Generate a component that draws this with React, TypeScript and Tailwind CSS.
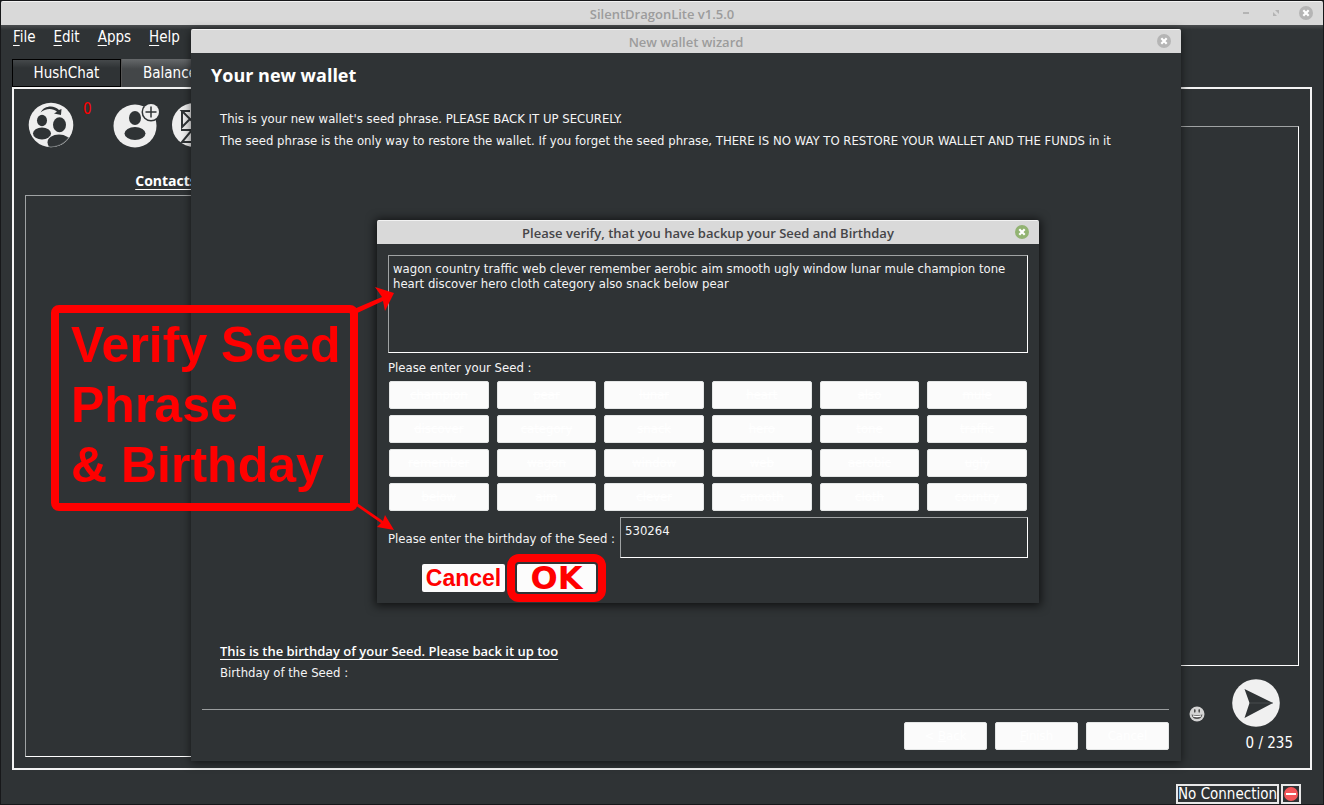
import React from "react";

const seedPhrase =
  "wagon country traffic web clever remember aerobic aim smooth ugly window lunar mule champion tone heart discover hero cloth category also snack below pear";

const words = [
  "champion", "pear", "lunar", "heart", "also", "mule",
  "discover", "category", "snack", "hero", "tone", "traffic",
  "remember", "wagon", "window", "web", "aerobic", "ugly",
  "below", "aim", "clever", "smooth", "cloth", "country",
];

const sunken = "border border-white border-t-[#a0a3a4] border-l-[#a0a3a4]";
const paleButton =
  "h-7 rounded-xs border border-[#e4e6e6] bg-[#fbfbfb] text-[13px] leading-4 text-white";

function CloseButton({ color }: { color: string }) {
  return (
    <button type="button" aria-label="Close" className="size-[14px]">
      <svg viewBox="0 0 14 14" className="block size-[14px]">
        <circle cx="7" cy="7" r="7" fill={color} />
        <path d="M4.300 4.300l5.400 5.400M9.700 4.300l-5.400 5.400" stroke="#fff" strokeWidth="2.200" />
      </svg>
    </button>
  );
}

function TitleBar({
  title,
  active = false,
  children,
}: {
  title: string;
  active?: boolean;
  children: React.ReactNode;
}) {
  return (
    <header className="grid h-6 shrink-0 grid-cols-[1fr_auto_1fr] items-center rounded-t-xs border-t border-[#f2f2f2] bg-[#d9d9d9] px-[10px] font-['Open_Sans','Noto_Sans',sans-serif]">
      <span />
      <h2
        className={
          "text-[13px] leading-5 font-semibold " +
          (active ? "text-[#454548]" : "text-[#9c9c9c]")
        }
      >
        {title}
      </h2>
      <div className="flex items-center justify-end gap-4 pb-0.5">{children}</div>
    </header>
  );
}

function GroupIcon() {
  return (
    <svg viewBox="0 0 46 46" className="size-[46px]">
      <defs>
        <clipPath id="group-disc">
          <circle cx="23" cy="23" r="22" />
        </clipPath>
      </defs>
      <circle cx="23" cy="23" r="22.300" fill="#eee" />
      <g clipPath="url(#group-disc)" fill="#2f3335">
        <ellipse cx="14" cy="18.500" rx="5" ry="5.700" />
        <ellipse cx="14" cy="31.500" rx="9" ry="6" />
        <ellipse cx="31.500" cy="23" rx="8" ry="9" fill="#eee" />
        <ellipse cx="31.500" cy="22.700" rx="6.500" ry="7.500" />
        <ellipse cx="31" cy="40.500" rx="12.500" ry="9" fill="#eee" />
        <ellipse cx="31" cy="40.500" rx="11.500" ry="8" />
        <path d="M12.500 10.500C16 3.500 26 2.500 31 8l2.500-1-.5 6-7-1.500 3-1.800C24.500 5.500 17 6.500 12.500 10.500z" />
      </g>
      <path d="M20 44.700A22 22 0 0 0 41 35" fill="none" stroke="#74787a" strokeWidth=".6" />
    </svg>
  );
}

function AddContactIcon() {
  return (
    <svg viewBox="0 0 48 48" className="size-12">
      <circle cx="22" cy="26" r="21.500" fill="#eee" />
      <g fill="#2f3335">
        <ellipse cx="22" cy="18" rx="6" ry="7" />
        <ellipse cx="22" cy="33.500" rx="10.500" ry="6.500" />
        <circle cx="38" cy="12" r="9.500" />
      </g>
      <circle cx="38" cy="12" r="8" fill="#eee" />
      <path d="M38 6.500v11M32.500 12h11" stroke="#2f3335" strokeWidth="1.500" />
    </svg>
  );
}

function ArchiveIcon() {
  return (
    <svg viewBox="0 0 46 46" className="size-[46px]">
      <circle cx="23" cy="23" r="22" fill="#eee" />
      <path
        d="M19 9h-8l8 8-8 8V9M10 28h11L11 40h12M19 17l4 4M27 9h8v16l-8-8z"
        fill="none"
        stroke="#2f3335"
        strokeWidth="2"
      />
    </svg>
  );
}

function SmileIcon() {
  return (
    <svg viewBox="0 0 16 16" className="size-4">
      <circle cx="8" cy="8" r="7.500" fill="#d4d4d4" />
      <ellipse cx="5.800" cy="4.800" rx=".8" ry="1.900" fill="#444" />
      <ellipse cx="10.200" cy="4.800" rx=".8" ry="1.900" fill="#444" />
      <path d="M2.500 8.500Q8 10 13.500 8.500Q12.500 13 8 13T2.500 8.500z" fill="#555" />
      <path d="M3.800 9.300Q8 10.500 12.200 9.300L11.800 10.800Q8 11.700 4.200 10.800z" fill="#fff" />
    </svg>
  );
}

function SendIcon() {
  return (
    <svg viewBox="0 0 48 48" className="size-12">
      <circle cx="24" cy="24" r="23.800" fill="#f0f0f0" />
      <path d="M12.500 10L41 24 12.500 39l5-15z" fill="#2f3335" />
      <path d="M17.500 24H41" stroke="#54585a" strokeWidth=".7" />
    </svg>
  );
}

function MainWindow() {
  return (
    <div className="flex min-h-[803px] flex-1 flex-col bg-[#2f3335]">
      <TitleBar title="SilentDragonLite v1.5.0">
        <button type="button" aria-label="Minimize" className="size-[14px]">
          <svg viewBox="0 0 14 14" className="block">
            <path d="M4 7h6" stroke="#b4b4b4" strokeWidth="2" />
          </svg>
        </button>
        <button type="button" aria-label="Maximize" className="size-[14px]">
          <svg viewBox="0 0 14 14" className="block" fill="#b4b4b4">
            <path d="M6 4h4v4zM4 6v4h4z" />
          </svg>
        </button>
        <CloseButton color="#b5b5b5" />
      </TitleBar>
      <div className="flex flex-1 flex-col bg-linear-to-b from-[#4b4e50] to-[#2f3335] to-[5px] pr-[11px] pl-[11px]">
        <nav className="flex h-[34px] items-start gap-[18px] pt-0.5 pl-px text-[15px] leading-5 text-white">
          {["File", "Edit", "Apps", "Help"].map((m) => (
            <button key={m} type="button">
              <span className="underline underline-offset-3">{m[0]}</span>
              {m.slice(1)}
            </button>
          ))}
        </nav>
        <div className="flex h-7 shrink-0 text-[15px] leading-5 text-white">
          <button
            type="button"
            className="w-[109px] border border-black bg-linear-to-b from-[#45494b] to-[#2f3335] to-[8px]"
          >
            HushChat
          </button>
          <button
            type="button"
            className="w-[109px] border-l border-[#555] bg-linear-to-b from-[#66696b] to-[#434648] to-[10px] pr-3"
          >
            Balance
          </button>
        </div>
        <main className="flex flex-1 border-2 border-[#f4f4f4]">
          <section className="flex w-[293px] flex-col pt-3 pb-[11px] pl-[11px]">
            <div className="flex h-[70px] items-start pl-[3px]">
              <button type="button" aria-label="Group contacts" className="pt-px">
                <GroupIcon />
              </button>
              <span className="w-[33px] pl-[9px] text-[15px] leading-4 text-[#f00]">0</span>
              <button type="button" aria-label="Add contact" className="-mt-px pl-1.5">
                <AddContactIcon />
              </button>
              <button type="button" aria-label="Archive" className="pt-px pl-[10px]">
                <ArchiveIcon />
              </button>
            </div>
            <h3 className="h-6 text-center font-['Open_Sans','Noto_Sans',sans-serif] text-[14px] leading-5 font-bold text-white underline underline-offset-3">
              Contacts
            </h3>
            <div className={"flex-1 " + sunken} />
          </section>
          <section className="flex flex-1 flex-col pt-[37px] pr-[11px] pb-4 pl-3">
            <div className={"flex-1 " + sunken} />
            <div className="flex h-[86px] items-start justify-end pt-[13px] pr-1.5">
              <button type="button" aria-label="Emoji" className="pt-[27px] pr-[27px]">
                <SmileIcon />
              </button>
              <div className="flex w-[61px] flex-col items-end">
                <button type="button" aria-label="Send" className="mr-[13px]">
                  <SendIcon />
                </button>
                <span className="pt-1.5 text-[15px] leading-5 whitespace-nowrap text-white">0 / 235</span>
              </div>
            </div>
          </section>
        </main>
        <footer className="flex h-[34px] items-end justify-end gap-0.5 pr-[11px]">
          <div className="border-2 border-[#e8e8e8] text-[15px] leading-4 text-white">No Connection</div>
          <div className="flex size-5 items-center justify-center border-2 border-[#e8e8e8]">
            <svg viewBox="0 0 14 14" className="size-[14px]">
              <circle cx="7" cy="7" r="7" fill="#f35558" />
              <path d="M2 7h10" stroke="#fff" strokeWidth="2" />
            </svg>
          </div>
        </footer>
      </div>
    </div>
  );
}

function WizardDialog() {
  return (
    <section className="absolute top-[29px] left-[191px] flex min-h-[732px] w-[990px] flex-col rounded-t-xs bg-[#2f3335] text-[#f5f5f5] shadow-[0_2px_10px_rgba(0,0,0,0.6)]">
      <TitleBar title="New wallet wizard">
        <CloseButton color="#b5b5b5" />
      </TitleBar>
      <h1 className="pt-2.5 pl-5 font-['Open_Sans','Noto_Sans',sans-serif] text-[18px] leading-6 font-bold text-white">
        Your new wallet
      </h1>
      <div className="flex flex-1 flex-col justify-between px-[29px] pt-[21px] pb-[25px] text-[13px] leading-[22px]">
        <div>
          <p>This is your new wallet's seed phrase. PLEASE BACK IT UP SECURELY.</p>
          <p className="whitespace-nowrap">
            The seed phrase is the only way to restore the wallet. If you forget the seed phrase, THERE IS NO WAY TO
            RESTORE YOUR WALLET AND THE FUNDS in it
          </p>
        </div>
        <div>
          <p className="font-['Open_Sans','Noto_Sans',sans-serif] font-semibold text-white underline underline-offset-3">
            This is the birthday of your Seed. Please back it up too
          </p>
          <p>Birthday of the Seed :</p>
        </div>
      </div>
      <div className="mr-3 mb-[11px] ml-[11px] flex justify-end gap-2 border-t border-[#9a9d9e] pt-3">
        <button type="button" className={"w-[83px] " + paleButton}>
          &lt; <span className="underline">B</span>ack
        </button>
        <button type="button" className={"w-[83px] " + paleButton}>
          <span className="underline">F</span>inish
        </button>
        <button type="button" className={"w-[83px] " + paleButton}>
          Cancel
        </button>
      </div>
    </section>
  );
}

function VerifyDialog() {
  return (
    <section className="absolute top-[220px] left-[377px] w-[662px] rounded-t-xs bg-[#2f3335] text-[13px] text-[#f5f5f5] shadow-[0_1px_10px_2px_rgba(0,0,0,0.65)]">
      <TitleBar title="Please verify, that you have backup your Seed and Birthday" active>
        <CloseButton color="#92b372" />
      </TitleBar>
      <div className="px-[11px] pt-[11px] pb-[11px]">
        <textarea
          aria-label="Seed phrase"
          defaultValue={seedPhrase}
          className={"block h-[98px] w-full resize-none bg-transparent px-1 pt-[5px] leading-[15px] " + sunken}
        />
        <p className="pt-[5px] pb-[3px] leading-5">Please enter your Seed :</p>
        <div className="grid grid-cols-6 gap-x-2 gap-y-1.5 px-px">
          {words.map((w) => (
            <button key={w} type="button" className={"line-through " + paleButton}>
              {w}
            </button>
          ))}
        </div>
        <div className="grid grid-cols-[232px_1fr] items-center pt-1.5">
          <label htmlFor="birthday" className="pt-0.5 whitespace-nowrap">
            Please enter the birthday of the Seed :
          </label>
          <textarea
            id="birthday"
            defaultValue="530264"
            className={"block h-[41px] w-full resize-none bg-transparent px-1 pt-[5px] leading-[15px] " + sunken}
          />
        </div>
        <div className="flex gap-3 pt-1.5 pl-[34px]">
          <button
            type="button"
            className="h-7 w-[83px] rounded-xs bg-[#fcfcfc] font-['Liberation_Sans',Arial,sans-serif] text-[23px] leading-7 font-bold text-[#f00]"
          >
            Cancel
          </button>
          <button
            type="button"
            className="h-7 w-[79px] rounded-xs bg-[#fcfcfc] font-['DejaVu_Sans',sans-serif] text-[32px] leading-7 font-bold text-[#f00] outline-8 outline-offset-2 outline-[#f00]"
          >
            OK
          </button>
        </div>
      </div>
    </section>
  );
}

function Callout() {
  return (
    <aside className="pointer-events-none absolute top-[305px] left-[51px] h-[206px] w-[307px] rounded-lg border-8 border-[#f00] pt-0.5 pl-3 font-['Liberation_Sans',Arial,sans-serif] text-[50px] leading-[60px] font-bold whitespace-nowrap text-[#f00]">
      <p>Verify Seed</p>
      <p>Phrase</p>
      <p>&amp; Birthday</p>
      <svg viewBox="0 0 60 260" className="absolute -top-[33px] left-[287px] h-[260px] w-[60px]" fill="#f00">
        <path d="M1 32L36 17l-7-10 19 6-9 18-2-10L7 35z" />
        <path d="M9 225l26 18-4 4 17 3-9-15-2 6-26-18z" />
      </svg>
    </aside>
  );
}

export default function App() {
  return (
    <div className="relative flex min-h-screen flex-col overflow-hidden bg-[#17181a] p-px font-['DejaVu_Sans_Condensed','DejaVu_Sans',sans-serif]">
      <MainWindow />
      <WizardDialog />
      <VerifyDialog />
      <Callout />
    </div>
  );
}
